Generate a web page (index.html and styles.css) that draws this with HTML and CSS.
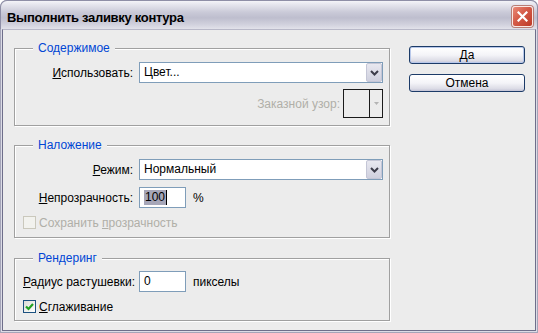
FILE: index.html
```html
<!DOCTYPE html>
<html lang="ru">
<head>
    <meta charset="UTF-8">
    <title>Выполнить заливку контура</title>
    <link rel="stylesheet" href="styles.css">
</head>
<body>
    <div class="window">
        <div class="titlebar">
            <span class="title">Выполнить заливку контура</span>
            <span class="close">
                <svg width="11" height="11" viewBox="0 0 11 11"><path d="M1.5 1.5 L9.5 9.5 M9.5 1.5 L1.5 9.5" stroke="#fff" stroke-width="2.2" stroke-linecap="square"/></svg>
            </span>
        </div>

        <div class="body">
            <div class="groups">
                <fieldset class="group">
                    <legend>Содержимое</legend>
                    <div class="row">
                        <span class="lbl"><u>И</u>спользовать:</span>
                        <div class="select">
                            <span class="value">Цвет...</span>
                            <span class="drop">
                                <svg width="9" height="6" viewBox="0 0 9 6"><path d="M1 1 L4.5 4.5 L8 1" fill="none" stroke="#3c3c4a" stroke-width="2"/></svg>
                            </span>
                        </div>
                    </div>
                    <div class="pattern-row">
                        <span class="lbl disabled">Заказной узор:</span>
                        <div class="pattern">
                            <span class="swatch"></span>
                            <span class="pattern-arrow">
                                <svg width="5" height="3" viewBox="0 0 5 3"><path d="M0 0 L5 0 L2.5 3 Z" fill="#b4b4b4"/></svg>
                            </span>
                        </div>
                    </div>
                </fieldset>

                <fieldset class="group">
                    <legend>Наложение</legend>
                    <div class="row">
                        <span class="lbl"><u>Р</u>ежим:</span>
                        <div class="select">
                            <span class="value">Нормальный</span>
                            <span class="drop">
                                <svg width="9" height="6" viewBox="0 0 9 6"><path d="M1 1 L4.5 4.5 L8 1" fill="none" stroke="#3c3c4a" stroke-width="2"/></svg>
                            </span>
                        </div>
                    </div>
                    <div class="row row-unit">
                        <span class="lbl"><u>Н</u>епрозрачность:</span>
                        <div class="input"><span class="sel">100</span><span class="caret"></span></div>
                        <span class="unit">%</span>
                    </div>
                    <div class="check-row disabled">
                        <span class="checkbox"></span>
                        <span>Сохранить <u>п</u>розрачность</span>
                    </div>
                </fieldset>

                <fieldset class="group group-last">
                    <legend>Рендеринг</legend>
                    <div class="row row-unit">
                        <span class="lbl"><u>Р</u>адиус растушевки:</span>
                        <div class="input">0</div>
                        <span class="unit">пикселы</span>
                    </div>
                    <div class="check-row">
                        <span class="checkbox checked">
                            <svg width="9" height="9" viewBox="0 0 9 9"><path d="M1 4.5 L3.5 7 L8 2" fill="none" stroke="#21a121" stroke-width="2.2"/></svg>
                        </span>
                        <span><u>С</u>глаживание</span>
                    </div>
                </fieldset>
            </div>

            <div class="buttons">
                <button class="btn btn-default">Да</button>
                <button class="btn">Отмена</button>
            </div>
        </div>
    </div>
</body>
</html>
```

FILE: styles.css
```css
* {
    box-sizing: border-box;
    margin: 0;
    padding: 0;
}

body {
    font-family: "Liberation Sans", Arial, sans-serif;
    font-size: 12px;
    color: #000;
    background: #fff;
}

u {
    text-decoration: underline;
    text-underline-offset: 1px;
}

/* Window frame */
.window {
    width: 538px;
    height: 333px;
    display: flex;
    flex-direction: column;
    background: #dcdce6;
    border-radius: 7px 7px 0 0;
    box-shadow: inset 0 0 0 1px #a4a4b8;
}

.titlebar {
    height: 29px;
    flex: none;
    display: flex;
    align-items: flex-start;
    justify-content: space-between;
    padding: 5px 4px 0 6px;
    border: 1px solid #8e8ea6;
    border-bottom: none;
    border-radius: 7px 7px 0 0;
    background: linear-gradient(to bottom, #f4f4f8 0%, #e6e6ee 12%, #cacad8 40%, #bebece 60%, #d2d2de 85%, #e2e2ea 100%);
}

.title {
    font-size: 13px;
    font-weight: bold;
    letter-spacing: -0.3px;
    line-height: 16px;
    margin-top: 4px;
    color: #000;
}

.close {
    width: 21px;
    height: 21px;
    display: flex;
    align-items: center;
    justify-content: center;
    border: 1px solid #fbe8e4;
    border-radius: 3px;
    background: linear-gradient(135deg, #ea8a78 0%, #d45a47 45%, #bd3a28 100%);
    box-shadow: 0 0 0 1px #b87e76;
}

.body {
    flex: 1;
    display: flex;
    gap: 19px;
    margin: 0 2px 2px;
    padding: 12px 10px 0 11px;
    background: #ececec;
    border: 1px solid #6e6e8a;
    border-top-color: #b8b8c8;
}

/* Group boxes */
.groups {
    flex: 0 0 376px;
    display: flex;
    flex-direction: column;
}

.group {
    border: 1px solid #a0a0a0;
    box-shadow: inset 1px 1px 0 #fff, 1px 1px 0 #fff;
    padding: 7px 6px 7px 8px;
    min-width: 0;
}

.group + .group {
    margin-top: 13px;
}

.group-last {
    margin-top: 14px !important;
    padding-top: 6px;
    padding-bottom: 6px;
}

.group legend {
    margin-left: 10px;
    padding: 0 5px;
    line-height: 13px;
    font-size: 12px;
    color: #0046d5;
    background: #ececec;
}

.row {
    display: grid;
    grid-template-columns: 110px 1fr;
    column-gap: 6px;
    align-items: center;
}

.row + .row {
    margin-top: 7px;
}

.row-unit {
    grid-template-columns: 110px 47px auto;
}

.lbl {
    text-align: right;
    white-space: nowrap;
}

.disabled,
.disabled u {
    color: #b0afa8;
}

/* Controls */
.select {
    height: 21px;
    display: flex;
    background: #fff;
    border: 1px solid #7f9db9;
}

.select .value {
    flex: 1;
    padding-left: 4px;
    line-height: 19px;
}

.drop {
    width: 16px;
    display: flex;
    align-items: center;
    justify-content: center;
    border: 1px solid #c4c6d6;
    border-radius: 2px;
    background: linear-gradient(to bottom, #e8e8f0, #cfd0de);
}

.pattern-row {
    display: flex;
    justify-content: flex-end;
    align-items: center;
    gap: 3px;
    margin-top: 6px;
}

.pattern {
    width: 40px;
    height: 29px;
    display: flex;
    border: 1px solid #1a1a1a;
}

.swatch {
    width: 26px;
    border-right: 1px solid #1a1a1a;
}

.pattern-arrow {
    flex: 1;
    display: flex;
    align-items: center;
    justify-content: center;
}

.input {
    height: 21px;
    padding-left: 4px;
    line-height: 19px;
    background: #fff;
    border: 1px solid #7f9db9;
    display: flex;
    align-items: center;
}

.input .sel {
    background: #a6a6b8;
    line-height: 15px;
    padding: 0 1px;
}

.input .caret {
    width: 1px;
    height: 15px;
    background: #000;
}

.unit {
    padding-left: 1px;
}

.check-row {
    display: flex;
    align-items: center;
    gap: 3px;
    height: 15px;
    margin-top: 7px;
}

.checkbox {
    width: 13px;
    height: 13px;
    display: flex;
    align-items: center;
    justify-content: center;
    border: 1px solid #cac8bc;
    background: #f2f2ee;
}

.checkbox.checked {
    border-color: #1c5180;
    background: linear-gradient(135deg, #dcdcd6, #fff);
}

/* Buttons */
.buttons {
    flex: 1;
    display: flex;
    flex-direction: column;
    gap: 10px;
    margin-top: 4px;
}

.btn {
    width: 116px;
    height: 18px;
    font-family: inherit;
    font-size: 12px;
    color: #000;
    border: 1px solid #1c3b68;
    border-radius: 3px;
    background: linear-gradient(to bottom, #ffffff 0%, #f4f4f8 50%, #dcdce6 85%, #c4c4d6 100%);
    cursor: pointer;
}

.btn-default {
    box-shadow: inset 0 0 0 1px #b8c8ea;
}
```
